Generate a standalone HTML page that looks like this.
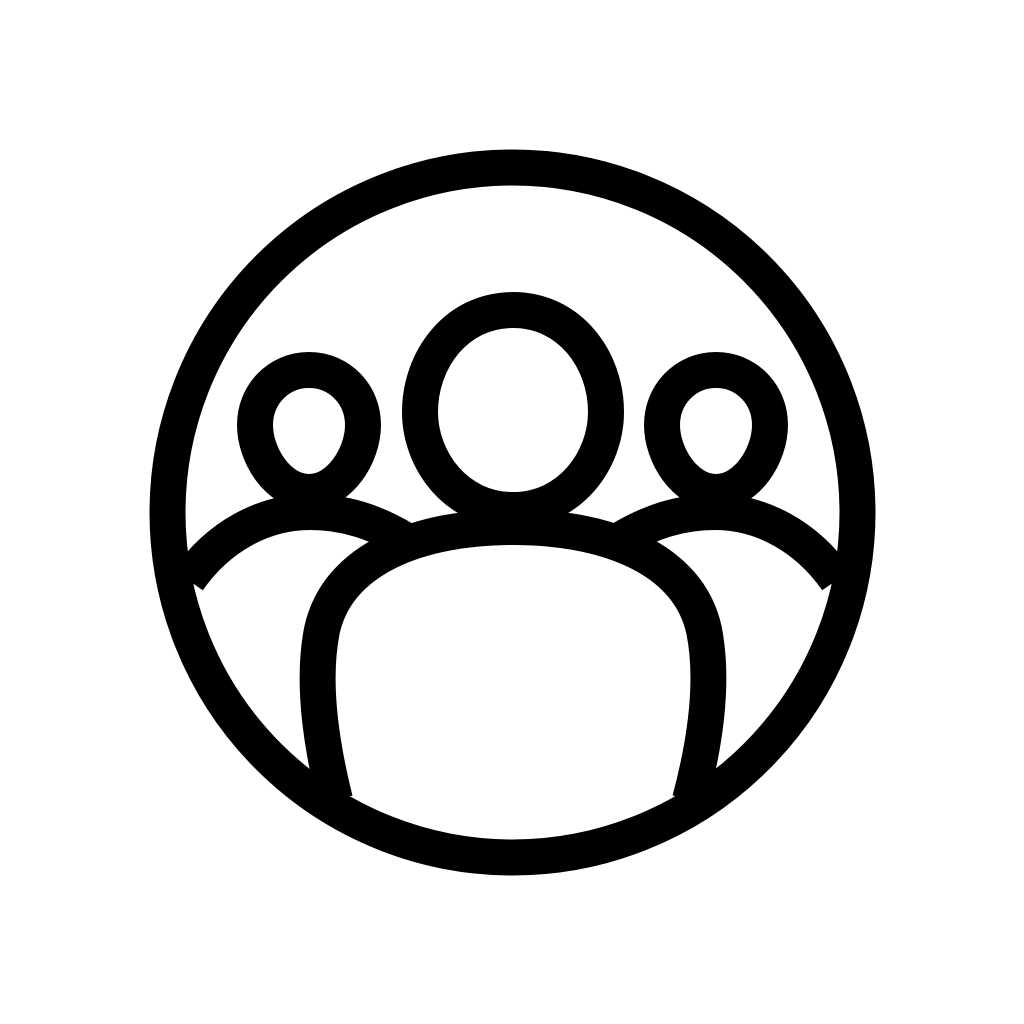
<!DOCTYPE html>
<html><head><meta charset="utf-8"><style>
html,body{margin:0;padding:0;background:#fff;width:1024px;height:1024px;overflow:hidden}
svg{display:block}
</style></head><body>
<svg width="1024" height="1024" viewBox="0 0 1024 1024" xmlns="http://www.w3.org/2000/svg">
<rect width="1024" height="1024" fill="#fff"/>
<g fill="none" stroke="#000" stroke-width="36" stroke-linejoin="round">
<circle cx="512.5" cy="512.5" r="345"/>
<path d="M513,310 C570,310 606,360 606,412 C606,460 570,510 513,510 C456,510 420,460 420,412 C420,360 456,310 513,310 Z"/>
<path d="M335,800 C320,740 312,680 322,630 C338,558 420,527 513,527 C606,527 688,558 704,630 C714,680 706,740 690,800"/>
<path d="M309,370 C340,370 363,395 363,425 C363,455 340,492 309,492 C278,492 255,455 255,425 C255,395 278,370 309,370 Z"/>
<path d="M716,370 C747,370 770,395 770,425 C770,455 747,492 716,492 C685,492 662,455 662,425 C662,395 685,370 716,370 Z"/>
<path d="M188,580 C218,537 263,512 310,512 C345,512 375,522 405,540"/>
<path d="M837,580 C807,537 762,512 715,512 C680,512 650,522 620,540"/>
</g>
</svg>
</body></html>
